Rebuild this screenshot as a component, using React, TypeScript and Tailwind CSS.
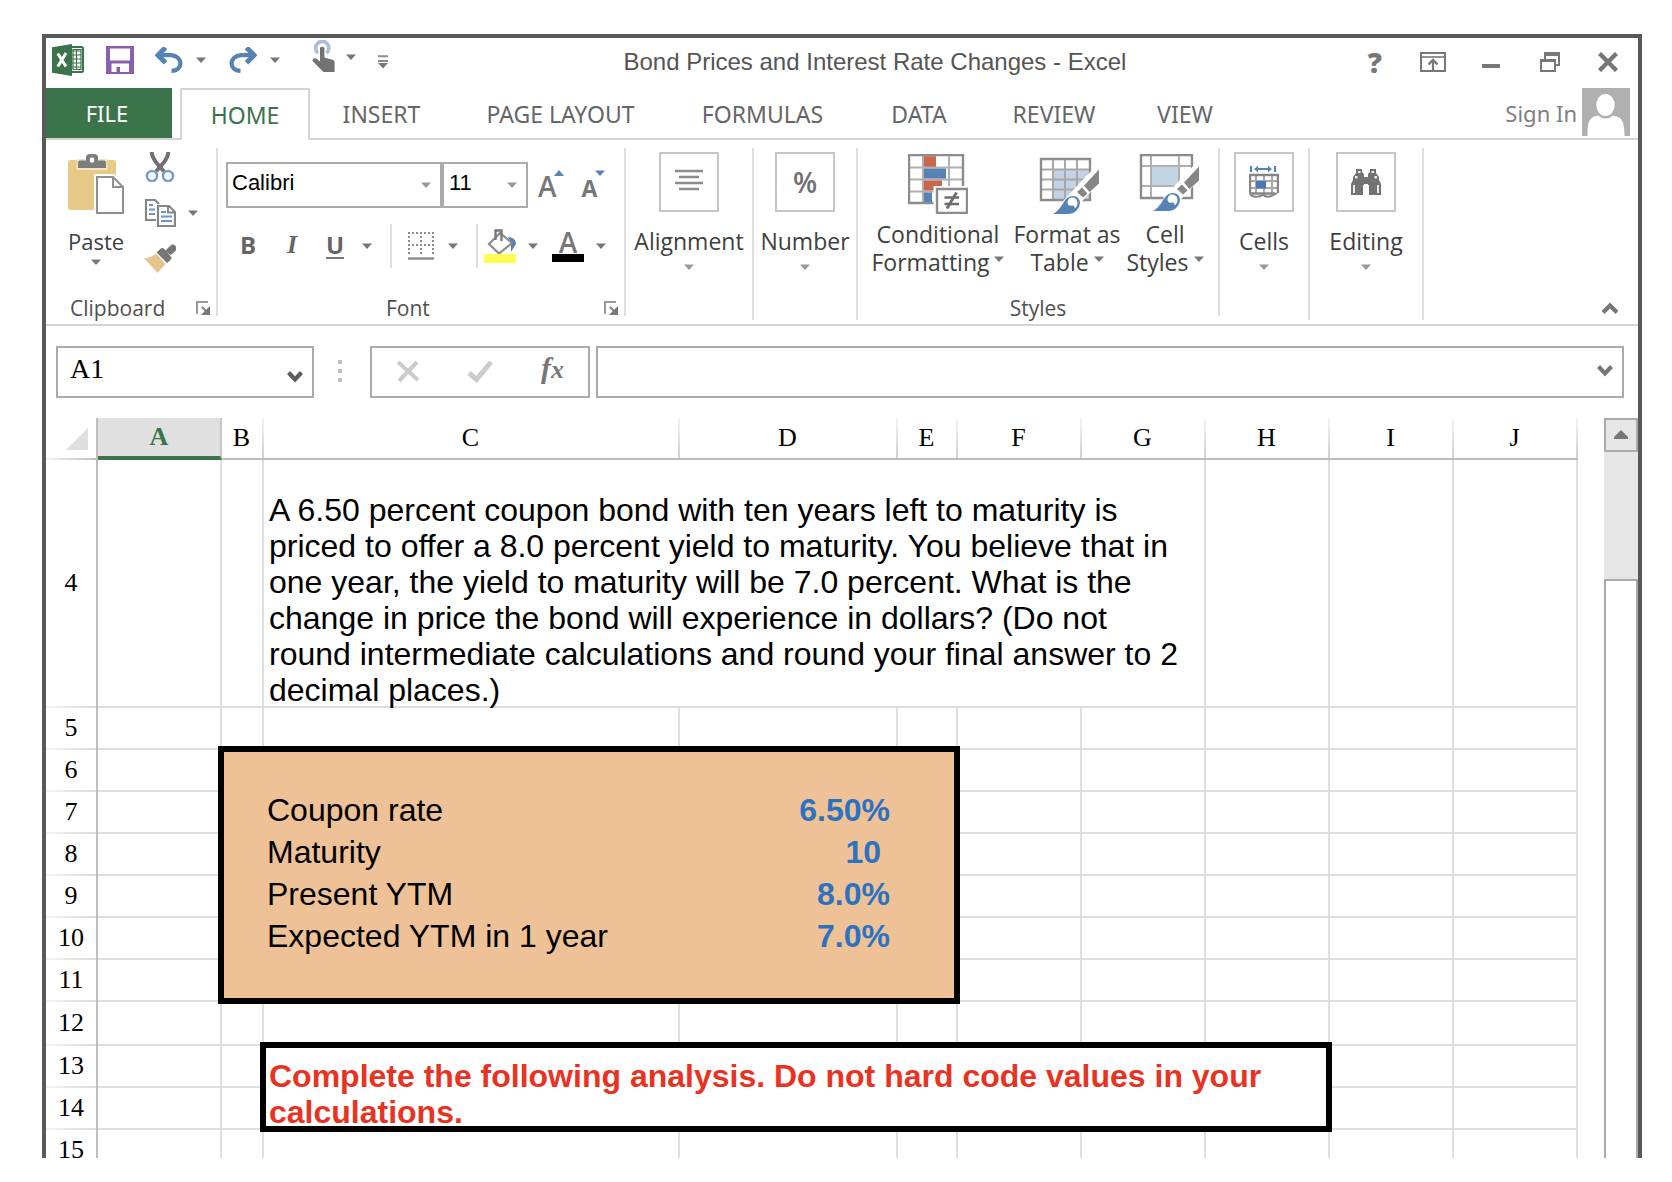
import type { ReactNode } from "react";

const UI = "font-['Open_Sans','Noto_Sans',sans-serif]";
const GRAY = "#777777";
const BLUE = "#5682b6";

function Caret({ color = GRAY, className = "" }: { color?: string; className?: string }) {
  return (
    <svg width="10" height="6" viewBox="0 0 10 6" className={`shrink-0 ${className}`} aria-hidden="true">
      <path d="M0 0.5h10L5 6z" fill={color} />
    </svg>
  );
}

function CaretButton({ label, className = "", color }: { label: string; className?: string; color?: string }) {
  return (
    <button type="button" aria-label={label} className={`shrink-0 ${className}`}>
      <Caret color={color} />
    </button>
  );
}

/* ---------- icons ---------- */

function ExcelLogo() {
  return (
    <svg width="32" height="32" viewBox="0 0 32 32" aria-hidden="true">
      <rect x="17" y="3" width="14" height="25" rx="1.500" fill="#fff" stroke="#3b734a" strokeWidth="2" />
      <path d="M20 7h9M20 11h9M20 15h9M20 19h9M20 23h9M24.500 5v20" stroke="#3b734a" strokeWidth="1.200" />
      <path d="M21 5.500h8v20h-8z" fill="none" stroke="#3b734a" strokeWidth="1.200" />
      <path d="M0 3.200 20 0v32L0 28.800z" fill="#3b734a" />
      <path d="M5.800 9.500 14 22.500M14 9 5.800 22.500" stroke="#fff" strokeWidth="3" fill="none" />
    </svg>
  );
}

function SaveIcon() {
  return (
    <svg width="28" height="28" viewBox="0 0 28 28" aria-hidden="true">
      <path fillRule="evenodd" fill="#8a5fae" d="M0 0h28v28H0zM4 2.400v12h20v-12zM5.500 17.600V26h5v-5h3.500v5h9v-8.400z" />
    </svg>
  );
}

function UndoIcon({ flip = false }: { flip?: boolean }) {
  return (
    <svg width="28" height="26" viewBox="0 0 28 26" aria-hidden="true">
      <g transform={flip ? "matrix(-1 0 0 1 28 0)" : undefined} fill="none" stroke={BLUE} strokeWidth="4.200">
        <path d="M3 8.200h13c12.500 1 12.500 15.500 0.500 15.600" />
        <path d="M10.500 0.500 3 8.200l7.500 7.600" strokeWidth="5" />
      </g>
    </svg>
  );
}

function TouchIcon() {
  return (
    <svg width="24" height="32" viewBox="0 0 24 32" aria-hidden="true">
      <path d="M6 13a6.600 6.600 0 1 1 8.500 0" fill="none" stroke="#a9bfdb" strokeWidth="3.600" />
      <path
        fill="#727272"
        d="M8 8.500c0-2.400 4.400-2.400 4.400 0v9l8.200 2.200c1.400.4 2 1.300 2 2.700V32H11.500L1 21.500c-1.600-2 1.200-4.300 3.200-2.900l3.800 2.900z"
      />
    </svg>
  );
}

function CustomizeIcon() {
  return (
    <svg width="10" height="14" viewBox="0 0 10 14" aria-hidden="true">
      <path d="M0 1.200h10M0 6h10" stroke="#8c8c8c" strokeWidth="2" />
      <path d="M0 8h10l-5 5.500z" fill={GRAY} />
    </svg>
  );
}

function RibbonOptionsIcon() {
  return (
    <svg width="26" height="20" viewBox="0 0 26 20" fill="none" stroke={GRAY} aria-hidden="true">
      <path d="M1 1h24v18H1z" strokeWidth="2" />
      <path d="M1 5h24" strokeWidth="1.600" />
      <path d="M13 18V8" strokeWidth="2.200" />
      <path d="m8.500 12.500 4.500-4.500 4.500 4.500" strokeWidth="2.400" />
    </svg>
  );
}

function RestoreIcon() {
  return (
    <svg width="20" height="20" viewBox="0 0 20 20" fill="none" stroke={GRAY} aria-hidden="true">
      <path d="M5 7V1h14v12h-4" strokeWidth="2" />
      <path d="M5 2.500h14" strokeWidth="3" />
      <path d="M1 8h14v11H1z" strokeWidth="2" />
      <path d="M1 8.500h14" strokeWidth="3" />
    </svg>
  );
}

function CloseIcon() {
  return (
    <svg width="20" height="20" viewBox="0 0 20 20" aria-hidden="true">
      <path d="m1.500 1.500 17 17M18.500 1.500l-17 17" stroke={GRAY} strokeWidth="4.400" />
    </svg>
  );
}

function Avatar() {
  return (
    <svg width="48" height="48" viewBox="0 0 48 48" aria-hidden="true">
      <path d="M0 0h48v48H0z" fill="#b0b0b0" />
      <path d="M5.500 48c0-8 .5-14 3-17 2-2.600 5-3 8-3.600 3 4 11 4 14 0 3 .6 6 1 8.500 3.600 2.500 3 3.500 9 3.500 17z" fill="#fff" />
      <ellipse cx="23.500" cy="17" rx="10.600" ry="12.600" fill="#b0b0b0" />
      <ellipse cx="23.500" cy="17" rx="9.200" ry="11" fill="#fff" />
    </svg>
  );
}

function PasteIcon() {
  return (
    <svg width="56" height="60" viewBox="0 0 56 60" aria-hidden="true">
      <rect x="0" y="6" width="48" height="50" rx="2.500" fill="#e6ca86" />
      <path d="M8.500 5h31v11h-31z" fill="#f3e5c3" />
      <path d="M10 14V8.500c0-1.500 1-2 2.500-2H18V3.500C18 1.500 19.500 0 21.500 0h5C28.500 0 30 1.500 30 3.500v3h5.500c1.500 0 2.500.5 2.500 2V14z" fill="#7d7d7d" />
      <rect x="21.800" y="3.500" width="4.400" height="5" rx="1.500" fill="#fff" />
      <path d="M26 20h20l10 10v30H26z" fill="#fff" />
      <path d="M29 23h16l10 10v26H29z" fill="#fff" stroke="#909090" strokeWidth="2" />
      <path d="M45 23v10h10" fill="none" stroke="#909090" strokeWidth="2" />
    </svg>
  );
}

function CutIcon() {
  return (
    <svg width="32" height="30" viewBox="0 0 32 30" fill="none" aria-hidden="true">
      <path d="M7.500 0c1 7 5 11 12.500 19.500" stroke="#707070" strokeWidth="4" />
      <path d="M24.500 0c-1 7-5 11-12.500 19.500" stroke="#707070" strokeWidth="4" />
      <circle cx="8" cy="24" r="5" fill="#fff" stroke="#779dcb" strokeWidth="2.600" />
      <circle cx="24" cy="24" r="5" fill="#fff" stroke="#779dcb" strokeWidth="2.600" />
    </svg>
  );
}

function CopyIcon() {
  return (
    <svg width="32" height="30" viewBox="0 0 32 30" fill="none" aria-hidden="true">
      <path d="M12 22H2V2h9l4 4" stroke="#868686" strokeWidth="2.200" />
      <path d="M5 7h4M5 11.500h6M5 16h6" stroke="#6f95c6" strokeWidth="2.200" />
      <path d="M14 8h11l6 6v14H14z" fill="#fff" stroke="#868686" strokeWidth="2.200" />
      <path d="M24 8v6.500h7" stroke="#868686" strokeWidth="2" />
      <path d="M17 14h5M17 18.500h11M17 23h11" stroke="#6f95c6" strokeWidth="2.200" />
    </svg>
  );
}

function PainterIcon() {
  return (
    <svg width="32" height="30" viewBox="0 0 32 30" aria-hidden="true">
      <path d="M0 14c5 .5 8-1.500 12-4.500L21.500 20 13.500 29z" fill="#e6c48c" />
      <path d="m12.500 8.500 4-3.800c1-1 2.500-1 3.500 0l7 8c1 1 .5 2.500-.5 3.200l-3.500 3z" fill="#767676" />
      <path d="m21 7 5.500-5.500C28 0 30 0 31.500 2s1 4 0 5L26.500 11z" fill="#767676" />
    </svg>
  );
}

function LauncherIcon() {
  return (
    <svg width="14" height="14" viewBox="0 0 14 14" aria-hidden="true">
      <path d="M1 13V1h11" fill="none" stroke="#9a9a9a" strokeWidth="2" />
      <path d="m6 6 5 5" stroke="#8a8a8a" strokeWidth="2.400" />
      <path d="M14 5v9H5z" fill="#777" />
    </svg>
  );
}

function BordersIcon() {
  return (
    <svg width="26" height="28" viewBox="0 0 26 28" fill="none" stroke="#8c8c8c" strokeWidth="2" aria-hidden="true">
      <path d="M0 1h26M0 13h26M1 0v24M13 0v24M25 0v24" strokeDasharray="2 2" />
      <path d="M0 26.500h26" strokeWidth="2.400" />
    </svg>
  );
}

function FillIcon() {
  return (
    <svg width="32" height="34" viewBox="0 0 32 34" aria-hidden="true">
      <path d="M24 8c5 0 8 3 8 7l-5 8v-9z" fill={BLUE} />
      <path d="M5 15 16 4l12 10-13 10.500z" fill="#fff" stroke="#8c8c8c" strokeWidth="2.200" />
      <path d="M11.500 11V1.500h6V12" fill="none" stroke="#7a7a7a" strokeWidth="2.400" />
      <path d="M0 25h32v9H0z" fill="#fffd54" />
    </svg>
  );
}

function AlignIcon() {
  return (
    <svg width="28" height="22" viewBox="0 0 28 22" stroke="#8c8c8c" strokeWidth="2.600" className="-mt-1" aria-hidden="true">
      <path d="M0 2h28M4 8h20M0 14h28M4 20h20" />
    </svg>
  );
}

function ConditionalIcon() {
  return (
    <svg width="60" height="60" viewBox="0 0 60 60" fill="none" aria-hidden="true">
      <path d="M15 1v49M41 1v49M1 13.500h54M1 25.500h54M1 37.500h54" stroke="#b0b0b0" strokeWidth="2" />
      <path d="M1 1h54v48H1z" stroke="#8c8c8c" strokeWidth="2.400" />
      <path d="M16 2.200h12v10.500H16zM16 26.500h18v10H16z" fill="#c9674c" />
      <path d="M16 14.500h22v10H16zM16 38.500h8v9.500h-8z" fill={BLUE} />
      <path d="M25.500 32H60v28H25.500z" fill="#fff" />
      <path d="M29 35h30v24H29z" fill="#fff" stroke="#8c8c8c" strokeWidth="2.400" />
      <path d="M36.500 43.500h14.500M36.500 50h14.500" stroke="#6e6e6e" strokeWidth="2.400" />
      <path d="M48.500 38.500 39 54.500" stroke="#6e6e6e" strokeWidth="2.800" />
    </svg>
  );
}

function Brush() {
  return (
    <g>
      <path d="M24 44 56 10l4-2v18L34 54z" fill="#fff" />
      <path d="M60 12.500v14L50.500 35 45 28.500z" fill="#868686" />
      <path d="m43 30.500 5.500 6-4.500 4-6-5.500z" fill="#868686" />
      <path d="M14 57c7-4 9-10 13-15 4-4 10-4 12.500-.5S41 50 37.500 53.500 31 57 27 57z" fill={BLUE} />
      <path d="M31 41c4-1.500 7.500 1 7.500 5 0 2-1 4.500-3 5.500.5-2.500-1-3.500-2.500-3-2.500 1-4.500-.5-4.500-3 0-2 1-3.500 2.500-4.500z" fill="#fff" />
    </g>
  );
}

function FormatTableIcon() {
  return (
    <svg width="60" height="60" viewBox="0 0 60 60" fill="none" aria-hidden="true">
      <path d="M15 16h36v29H15z" fill="#c2d3e4" />
      <path d="M14 5v40M26 5v40M38 5v40M2 15.500h49M2 25.500h49M2 35.500h49" stroke="#a8a8a8" strokeWidth="2" />
      <path d="M2 5h49v41H2z" stroke="#8c8c8c" strokeWidth="2.400" />
      <g transform="translate(0 3)">
        <Brush />
      </g>
    </svg>
  );
}

function CellStylesIcon() {
  return (
    <svg width="60" height="60" viewBox="0 0 60 60" fill="none" aria-hidden="true">
      <path d="M12 12h28v20H12z" fill="#c2d3e4" />
      <path d="M12 1v43M40 1v43M2 12h51M2 32h51" stroke="#b0b0b0" strokeWidth="2" />
      <path d="M2 1h51v43H2z" stroke="#8c8c8c" strokeWidth="2.400" />
      <Brush />
    </svg>
  );
}

function CellsIcon() {
  return (
    <svg width="30" height="34" viewBox="0 0 30 34" fill="none" aria-hidden="true">
      <path d="M2 1v6M26 1v6M6 4h16" stroke={BLUE} strokeWidth="2.200" />
      <path d="M5 4l4-3.200v6.400zM23 4l-4-3.200v6.400z" fill={BLUE} />
      <path d="M7 10v18M15 10v18M23 10v18M1 16h28M1 23h28" stroke="#a8a8a8" strokeWidth="2" />
      <path d="M1 29V10h28v18M1 28.500h25" stroke="#868686" strokeWidth="2.400" />
      <path d="M1 28c1 5 10 4.500 13 1.500 3 3.500 8 2.500 14-1.500" stroke="#868686" strokeWidth="2" />
      <path d="M7 16h10v7.500H7z" fill="#4a78b5" />
    </svg>
  );
}

function BinocularsIcon() {
  return (
    <svg width="30" height="26" viewBox="0 0 30 26" aria-hidden="true">
      <path
        fill="#737373"
        d="M5 0h6v3l2 2v3h4V5l2-2V0h6v4l3 4v3l2 4v11H18V16h-1v-1h-4v1h-1v10H0V15l2-4V8l3-4z"
      />
      <path fill="#fff" fillOpacity="0.850" d="M7 2h2.500v2H7zM20.500 2H23v2h-2.500zM4 7h2.500v2.500H4zM23.500 7H26v2.500h-2.500zM2 16h2v8H2zM26 16h2v8h-2z" />
    </svg>
  );
}

function ChevronIcon({ up = false, color = GRAY }: { up?: boolean; color?: string }) {
  return (
    <svg width="16" height="12" viewBox="0 0 16 12" fill="none" stroke={color} strokeWidth="4.200" aria-hidden="true">
      <path d={up ? "m1 10.500 7-7 7 7" : "m1.500 1.500 6.500 7 6.500-7"} />
    </svg>
  );
}

/* ---------- title bar and tabs ---------- */

function TitleBar() {
  return (
    <header className="flex h-[50px] shrink-0 items-center">
      <div className="flex items-center pb-[6px] pl-[6px]">
        <ExcelLogo />
        <button type="button" aria-label="Save" className="ml-[22px]"><SaveIcon /></button>
        <button type="button" aria-label="Undo" className="ml-[21px]"><UndoIcon /></button>
        <CaretButton label="Undo history" className="ml-[13px]" />
        <button type="button" aria-label="Redo" className="ml-[23px]"><UndoIcon flip /></button>
        <CaretButton label="Redo history" className="ml-[13px]" />
        <button type="button" aria-label="Touch mode" className="ml-8 pb-2"><TouchIcon /></button>
        <CaretButton label="Touch mode options" className="ml-[10px] pb-[6px]" />
        <button type="button" aria-label="Customize toolbar" className="ml-[22px] pt-1"><CustomizeIcon /></button>
      </div>
      <h1 className="flex-1 truncate pr-[6px] pb-[2px] text-center font-['Liberation_Sans',Arial,sans-serif] text-[24px] leading-[32px] text-[#555555]">
        Bond Prices and Interest Rate Changes - Excel
      </h1>
      <div className="flex items-center pr-5 pb-[2px]">
        <button type="button" aria-label="Help" className={`${UI} text-[28px] leading-[28px] font-extrabold text-[#777777]`}>?</button>
        <button type="button" aria-label="Ribbon display options" className="ml-[38px]"><RibbonOptionsIcon /></button>
        <button type="button" aria-label="Minimize" className="ml-[36px] pt-[8px]">
          <span className="block h-1 w-[18px] bg-[#777777]" />
        </button>
        <button type="button" aria-label="Restore" className="ml-[40px]"><RestoreIcon /></button>
        <button type="button" aria-label="Close" className="ml-[38px]"><CloseIcon /></button>
      </div>
    </header>
  );
}

const TABS = [
  { name: "INSERT", width: "w-[143px]" },
  { name: "PAGE LAYOUT", width: "w-[215px]" },
  { name: "FORMULAS", width: "w-[189px]" },
  { name: "DATA", width: "w-[124px]" },
  { name: "REVIEW", width: "w-[146px]" },
  { name: "VIEW", width: "w-[116px]" },
];

function TabBar() {
  return (
    <nav className="flex h-[52px] shrink-0 font-['Noto_Sans','Open_Sans',sans-serif] text-[23px] leading-[30px] text-[#666666]">
      <div className="flex w-[134px] shrink-0 border-b-2 border-[#d4d4d4]">
        <button type="button" className="w-[126px] bg-[#3b734a] pr-1 text-[22px] text-white">FILE</button>
      </div>
      <button type="button" className="w-[130px] shrink-0 rounded-t-xs border-2 border-b-0 border-[#d4d4d4] text-[#3b734a]">
        HOME
      </button>
      <div className="flex min-w-0 flex-1 border-b-2 border-[#d4d4d4]">
        {TABS.map((t) => (
          <button key={t.name} type="button" className={`${t.width} shrink-0 pt-[2px] whitespace-nowrap`}>
            {t.name}
          </button>
        ))}
        <button type="button" className="mr-2 ml-auto flex shrink-0 items-start gap-[5px] text-[22px] text-[#808080]">
          <span className="pt-[10px]">Sign In</span>
          <Avatar />
        </button>
      </div>
    </nav>
  );
}

/* ---------- ribbon ---------- */

function Separator({ tall = false }: { tall?: boolean }) {
  return <div className={`mt-2 w-[2px] shrink-0 bg-[#dedede] ${tall ? "mb-1" : "mb-2"}`} />;
}

function GroupLabel({ children, launcher, className = "" }: { children: ReactNode; launcher?: string; className?: string }) {
  return (
    <div className={`mt-auto mb-1 flex h-6 items-center text-[21px] leading-[24px] text-[#505050] ${className}`}>
      {children}
      {launcher && (
        <button type="button" aria-label={launcher} className="mr-[6px] ml-auto"><LauncherIcon /></button>
      )}
    </div>
  );
}

function BoxedGroup({ name, width, children }: { name: string; width: string; children: ReactNode }) {
  return (
    <button type="button" className={`${width} flex shrink-0 flex-col items-center pt-3 text-[23px] leading-[28px] text-[#404040]`}>
      <span className="flex size-[60px] items-center justify-center border-2 border-[#c6c6c6]">{children}</span>
      <span className="mt-[15px]">{name}</span>
      <Caret color="#999999" className="mt-[9px]" />
    </button>
  );
}

function StyleButton({ icon, top, bottom, width, pad = "" }: { icon: ReactNode; top: string; bottom: string; width: string; pad?: string }) {
  return (
    <button type="button" className={`${width} flex shrink-0 flex-col items-center text-[23px] leading-[28px] whitespace-nowrap text-[#404040]`}>
      <span className={pad}>{icon}</span>
      <span className="mt-[6px]">{top}</span>
      <span className="flex items-center gap-[5px]">
        {bottom}
        <Caret className="mb-[6px]" />
      </span>
    </button>
  );
}

function Ribbon() {
  return (
    <section aria-label="Ribbon" className={`${UI} flex h-[186px] shrink-0 border-b-2 border-[#d4d4d4]`}>
      <div className="flex w-[170px] shrink-0 flex-col">
        <div className="flex">
          <button type="button" className="ml-[22px] flex w-[56px] flex-col items-center pt-[14px] text-[22px] leading-[28px] text-[#404040]">
            <PasteIcon />
            <span className="mt-[13px]">Paste</span>
            <Caret className="mt-1" />
          </button>
          <div className="ml-5 flex flex-col gap-4 pt-3">
            <button type="button" aria-label="Cut" className="w-8"><CutIcon /></button>
            <div className="flex items-center gap-3">
              <button type="button" aria-label="Copy"><CopyIcon /></button>
              <CaretButton label="Copy options" />
            </div>
            <button type="button" aria-label="Format Painter" className="w-8"><PainterIcon /></button>
          </div>
        </div>
        <GroupLabel launcher="Clipboard settings" className="pl-6">Clipboard</GroupLabel>
      </div>
      <Separator />
      <div className="flex w-[406px] shrink-0 flex-col pt-[22px]">
        <div className="flex items-center pl-2 font-['Liberation_Sans',Arial,sans-serif] text-[22px] text-black">
          <div className="relative">
            <select aria-label="Font name" className="h-[46px] w-[216px] appearance-none border-2 border-[#ababab] bg-white pb-[6px] pl-1">
              <option>Calibri</option>
            </select>
            <Caret color="#999999" className="pointer-events-none absolute top-5 right-[11px]" />
          </div>
          <div className="relative">
            <select aria-label="Font size" className="h-[46px] w-[86px] appearance-none border-2 border-[#ababab] bg-white pb-[6px] pl-[5px]">
              <option>11</option>
            </select>
            <Caret color="#999999" className="pointer-events-none absolute top-5 right-[11px]" />
          </div>
          <button type="button" aria-label="Increase font size" className={`${UI} ml-[10px] flex h-[30px] items-start text-[28px] leading-[32px] font-semibold text-[#777777]`}>
            A
            <svg width="10" height="6" viewBox="0 0 10 6" aria-hidden="true" className="-ml-[3px]"><path d="M0 6h10L5 0z" fill={BLUE} /></svg>
          </button>
          <button type="button" aria-label="Decrease font size" className={`${UI} ml-[18px] flex h-[30px] items-start text-[23px] leading-[36px] font-bold text-[#777777]`}>
            A
            <Caret color={BLUE} className="-ml-[2px]" />
          </button>
        </div>
        <div className="mt-4 flex h-11 items-center pl-[22px] text-[24px] leading-[28px] text-[#666666]">
          <button type="button" aria-label="Bold" className="w-4 pb-[2px] font-bold">B</button>
          <button type="button" aria-label="Italic" className="ml-[28px] w-4 pb-[2px] font-['Liberation_Serif','Times_New_Roman',serif] text-[26px] font-bold italic">I</button>
          <button type="button" aria-label="Underline" className="ml-[26px] flex w-[18px] flex-col items-center leading-[24px] font-bold">
            U
            <span className="h-[2px] w-[18px] bg-[#777777]" />
          </button>
          <CaretButton label="Underline style" className="ml-[18px]" />
          <div className="ml-[18px] h-11 w-[2px] bg-[#dedede]" />
          <button type="button" aria-label="Borders" className="ml-4"><BordersIcon /></button>
          <CaretButton label="Border options" className="ml-[14px]" />
          <div className="ml-[18px] h-11 w-[2px] bg-[#dedede]" />
          <button type="button" aria-label="Fill color" className="ml-[6px]"><FillIcon /></button>
          <CaretButton label="Fill color options" className="ml-3" />
          <button type="button" aria-label="Font color" className="ml-[14px] flex w-8 flex-col items-center text-[28px] leading-[24px] font-semibold text-[#777777]">
            A
            <span className="h-2 w-8 bg-black" />
          </button>
          <CaretButton label="Font color options" className="ml-3" />
        </div>
        <GroupLabel launcher="Font settings" className="pl-[168px]">Font</GroupLabel>
      </div>
      <Separator />
      <BoxedGroup name="Alignment" width="w-[126px]"><AlignIcon /></BoxedGroup>
      <Separator tall />
      <BoxedGroup name="Number" width="w-[102px]">
        <span className="text-[28px] font-semibold text-[#707070]">%</span>
      </BoxedGroup>
      <Separator tall />
      <div className="flex w-[360px] shrink-0 flex-col pt-[14px]">
        <div className="flex pl-2">
          <StyleButton icon={<ConditionalIcon />} top="Conditional" bottom="Formatting" width="w-[144px]" />
          <StyleButton icon={<FormatTableIcon />} top="Format as" bottom="Table" width="w-[114px]" pad="pl-1" />
          <StyleButton icon={<CellStylesIcon />} top="Cell" bottom="Styles" width="w-[82px]" pad="pl-2" />
        </div>
        <GroupLabel className="justify-center">Styles</GroupLabel>
      </div>
      <Separator />
      <BoxedGroup name="Cells" width="w-[88px]"><CellsIcon /></BoxedGroup>
      <Separator tall />
      <BoxedGroup name="Editing" width="w-[112px]"><BinocularsIcon /></BoxedGroup>
      <Separator tall />
      <button type="button" aria-label="Collapse the ribbon" className="mr-5 mb-[10px] ml-auto self-end"><ChevronIcon up /></button>
    </section>
  );
}

/* ---------- formula bar ---------- */

function FormulaBar() {
  return (
    <section aria-label="Formula bar" className="flex shrink-0 items-center pt-5 pr-[14px] pb-5 pl-[10px]">
      <div className="flex h-[52px] w-[258px] shrink-0 items-center border-2 border-[#ababab] pr-[9px] pl-3">
        <input
          aria-label="Name box"
          defaultValue="A1"
          className="w-0 flex-1 pb-[6px] font-['Liberation_Serif','Times_New_Roman',serif] text-[28px] leading-[32px] text-black outline-none"
        />
        <button type="button" aria-label="Choose a name" className="pt-[10px]"><ChevronIcon color="#5c5c5c" /></button>
      </div>
      <svg width="4" height="24" viewBox="0 0 4 24" className="mx-6 shrink-0" aria-hidden="true">
        <path d="M0 0h4v4H0zM0 9h4v4H0zM0 18h4v4H0z" fill="#c0c0c0" />
      </svg>
      <div className="ml-1 flex h-[52px] w-[220px] shrink-0 items-center border-2 border-[#ababab] pl-[25px]">
        <button type="button" aria-label="Cancel">
          <svg width="22" height="22" viewBox="0 0 22 22" aria-hidden="true"><path d="m1 1 20 18M20 1 2 20" stroke="#cccccc" strokeWidth="4" /></svg>
        </button>
        <button type="button" aria-label="Enter" className="ml-12">
          <svg width="26" height="22" viewBox="0 0 26 22" aria-hidden="true"><path d="m2 12 7.500 6.500L24 1" fill="none" stroke="#cccccc" strokeWidth="5" /></svg>
        </button>
        <button type="button" aria-label="Insert function" className="ml-12 flex items-baseline pb-[6px] font-['Liberation_Serif','Times_New_Roman',serif] text-[30px] leading-[32px] font-bold text-[#777777] italic">
          f<span className="text-[26px]">x</span>
        </button>
      </div>
      <div className="ml-[6px] flex h-[52px] flex-1 items-center border-2 border-[#ababab] pr-[9px]">
        <input aria-label="Formula" className="min-w-0 flex-1 px-2 text-[24px] outline-none" />
        <button type="button" aria-label="Expand formula bar" className="pb-[2px]"><ChevronIcon /></button>
      </div>
    </section>
  );
}

/* ---------- sheet ---------- */

const COLUMNS = ["B", "C", "D", "E", "F", "G", "H", "I", "J"];
const CELL = "border-r-2 border-b-2 border-[#dedede] p-0";

function RowHeader({ n }: { n: number }) {
  return (
    <th
      scope="row"
      className="border-r-2 border-[#bdbdbd] bg-linear-to-r from-[#f4f4f4] to-[#d9d9d9] bg-[length:100%_2px] bg-bottom bg-no-repeat px-0 pt-0 pb-[2px] font-['Liberation_Serif','Times_New_Roman',serif] text-[26px] leading-[30px] font-normal"
    >
      {n}
    </th>
  );
}

function Blanks({ count }: { count: number }) {
  return (
    <>
      {Array.from({ length: count }, (_, i) => (
        <td key={i} className={CELL} />
      ))}
    </>
  );
}

function RangeRow({ n, label, value, first = false }: { n: number; label?: string; value?: string; first?: boolean }) {
  return (
    <tr className="h-[42px]">
      <RowHeader n={n} />
      <td className={CELL} />
      <td className={first ? "relative z-10 bg-[#efc196] p-0" : "bg-[#efc196] p-0"}>
        {first && (
          <div className="pointer-events-none absolute top-0 left-0 h-[250px] w-[734px] outline-6 -outline-offset-2 outline-black" />
        )}
      </td>
      <td className="bg-[#efc196] py-0 pr-0 pl-[3px] align-top">{label}</td>
      <td className="bg-[#efc196] py-0 pr-2 pl-0 text-right align-top font-bold whitespace-pre text-[#2d72c0]">{value}</td>
      <td className="border-r-2 border-[#efc196] bg-[#efc196] p-0" />
      <Blanks count={5} />
    </tr>
  );
}

function Sheet() {
  return (
    <div className="min-w-0 flex-1 overflow-hidden">
      <table className="w-[1532px] table-fixed border-separate border-spacing-0 font-['Liberation_Sans',Arial,sans-serif] text-[32px] leading-[36px] text-black">
        <colgroup>
          <col className="w-[52px]" />
          <col className="w-[124px]" />
          <col className="w-[42px]" />
          <col className="w-[416px]" />
          <col className="w-[218px]" />
          <col className="w-[60px]" />
          <col className="w-[124px]" />
          <col className="w-[124px]" />
          <col className="w-[124px]" />
          <col className="w-[124px]" />
          <col className="w-[124px]" />
        </colgroup>
        <thead className="font-['Liberation_Serif','Times_New_Roman',serif] text-[26px] leading-[30px]">
          <tr className="h-[42px]">
            <td className="border-r-2 border-[#bdbdbd] bg-linear-to-r from-[#f4f4f4] to-[#bdbdbd] bg-[length:100%_2px] bg-bottom bg-no-repeat p-0">
              <svg width="22" height="22" viewBox="0 0 22 22" className="mr-2 ml-auto" aria-hidden="true">
                <path d="M22 0v22H0z" fill="#dedede" />
              </svg>
            </td>
            <th scope="col" className="border-r-2 border-b-4 border-r-[#c6c6c6] border-b-[#3b734a] bg-[#e0e0e0] p-0 font-bold text-[#3b734a]">
              A
            </th>
            {COLUMNS.map((c) => (
              <th
                key={c}
                scope="col"
                className="border-b-2 border-[#bdbdbd] bg-linear-to-b from-[#f4f4f4] to-[#d0d0d0] bg-[length:2px_100%] bg-right bg-no-repeat py-0 pr-[3px] pl-0 font-normal"
              >
                {c}
              </th>
            ))}
          </tr>
        </thead>
        <tbody>
          <tr className="h-[248px]">
            <RowHeader n={4} />
            <Blanks count={2} />
            <td colSpan={5} className="border-r-2 border-b-2 border-[#dedede] py-0 pr-6 pl-[5px] align-bottom">
              <div className="-mb-[2px]">
                A 6.50 percent coupon bond with ten years left to maturity is priced to offer a 8.0 percent yield to
                maturity. You believe that in one year, the yield to maturity will be 7.0 percent. What is the change in
                price the bond will experience in dollars? (Do not round intermediate calculations and round your final
                answer to 2 decimal places.)
              </div>
            </td>
            <Blanks count={3} />
          </tr>
          <tr className="h-[42px]">
            <RowHeader n={5} />
            <Blanks count={10} />
          </tr>
          <RangeRow n={6} first />
          <RangeRow n={7} label="Coupon rate" value="6.50%" />
          <RangeRow n={8} label="Maturity" value={"10 "} />
          <RangeRow n={9} label="Present YTM" value="8.0%" />
          <RangeRow n={10} label="Expected YTM in 1 year" value="7.0%" />
          <RangeRow n={11} />
          <tr className="h-[44px]">
            <RowHeader n={12} />
            <Blanks count={10} />
          </tr>
          <tr className="h-[42px]">
            <RowHeader n={13} />
            <Blanks count={2} />
            <td colSpan={6} rowSpan={2} className="relative py-0 pr-4 pl-[5px] align-bottom font-bold text-[#e83323]">
              Complete the following analysis. Do not hard code values in your calculations.
              <div className="pointer-events-none absolute inset-0 mr-[2px] mb-[2px] outline-6 -outline-offset-2 outline-black" />
            </td>
            <Blanks count={2} />
          </tr>
          <tr className="h-[42px]">
            <RowHeader n={14} />
            <Blanks count={2} />
            <Blanks count={2} />
          </tr>
          <tr className="h-[42px]">
            <RowHeader n={15} />
            <Blanks count={10} />
          </tr>
        </tbody>
      </table>
    </div>
  );
}

function ScrollBar() {
  return (
    <div className="flex w-[34px] shrink-0 flex-col bg-[#e6e6e6]">
      <button type="button" aria-label="Scroll up" className="flex h-[34px] shrink-0 items-center justify-center border-2 border-[#ababab] pb-[2px]">
        <svg width="14" height="9" viewBox="0 0 14 9" aria-hidden="true"><path d="M0 9V7l7-7 7 7v2z" fill={GRAY} /></svg>
      </button>
      <div className="mt-[127px] flex-1 border-2 border-b-0 border-[#ababab] bg-white" />
    </div>
  );
}

export default function App() {
  return (
    <div className="h-screen overflow-hidden bg-white pt-[34px] pr-[30px] pb-6 pl-[42px]">
      <main className="flex h-full flex-col overflow-hidden border-4 border-b-0 border-[#595959] bg-white">
        <TitleBar />
        <TabBar />
        <Ribbon />
        <FormulaBar />
        <div className="flex min-h-0 flex-1">
          <Sheet />
          <ScrollBar />
        </div>
      </main>
    </div>
  );
}
